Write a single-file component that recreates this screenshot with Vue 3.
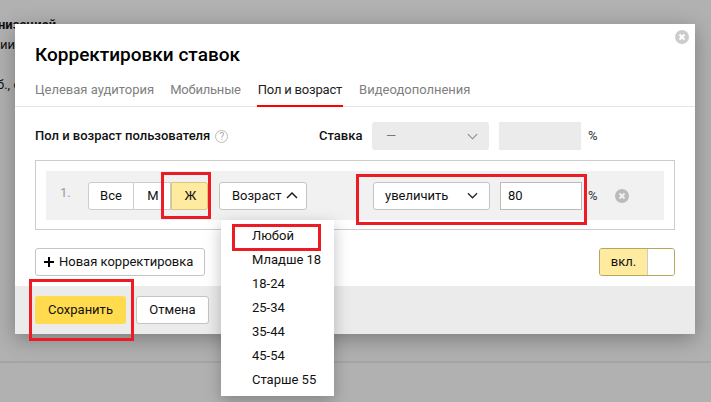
<script setup>
const tabs = [
  { label: 'Целевая аудитория' },
  { label: 'Мобильные' },
  { label: 'Пол и возраст', active: true },
  { label: 'Видеодополнения' }
]
const ages = ['Любой', 'Младше 18', '18-24', '25-34', '35-44', '45-54', 'Старше 55']
</script>

<template>
  <div class="page">
    <div class="bg-text t1">низацией</div>
    <div class="bg-text t2">ии</div>
    <div class="bg-text t3">б., с</div>
    <div class="bg-line"></div>

    <section class="modal">
      <svg class="close top-close" viewBox="0 0 14 14"><circle cx="7" cy="7" r="7" fill="#ccc"/><path d="M4.5 4.5l5 5M9.5 4.5l-5 5" stroke="#fff" stroke-width="2"/></svg>
      <h1 class="title">Корректировки ставок</h1>
      <nav class="tabs">
        <span v-for="t in tabs" :key="t.label" class="tab" :class="{ active: t.active }">{{ t.label }}</span>
      </nav>

      <div class="body">
        <div class="head">
          <div class="head-left">
            <b>Пол и возраст пользователя</b>
            <span class="help">?</span>
          </div>
          <b class="rate">Ставка</b>
          <div class="fake-select">
            <span>—</span>
            <svg class="chev" viewBox="0 0 12 7"><path d="M1 1l5 5 5-5" fill="none" stroke="#8a8a8a" stroke-width="1.2"/></svg>
          </div>
          <div class="fake-input"></div>
          <span class="pct">%</span>
        </div>

        <div class="rule">
          <div class="rule-inner">
            <span class="num">1.</span>
            <div class="segment">
              <span class="seg s1">Все</span>
              <span class="seg s2">М</span>
              <span class="seg s3">Ж</span>
            </div>
            <div class="btn age">Возраст
              <svg class="up" viewBox="0 0 12 7"><path d="M1 6l5-5 5 5" fill="none" stroke="#222" stroke-width="1.5"/></svg>
            </div>
            <div class="btn sel">
              <span>увеличить</span>
              <svg class="chev" viewBox="0 0 12 7"><path d="M1 1l5 5 5-5" fill="none" stroke="#222" stroke-width="1.3"/></svg>
            </div>
            <div class="input">80</div>
            <span class="pct p2">%</span>
            <svg class="close row-close" viewBox="0 0 14 14"><circle cx="7" cy="7" r="7" fill="#bbb"/><path d="M4.5 4.5l5 5M9.5 4.5l-5 5" stroke="#f1f1f1" stroke-width="2"/></svg>
          </div>
        </div>

        <div class="actions">
          <div class="btn add">
            <svg class="plus" viewBox="0 0 10 10"><path d="M5 0v10M0 5h10" stroke="#000" stroke-width="2"/></svg>
            Новая корректировка
          </div>
          <div class="toggle">
            <span class="on">вкл.</span>
            <span class="knob"></span>
          </div>
        </div>
      </div>

      <footer class="foot">
        <div class="btn save">Сохранить</div>
        <div class="btn cancel">Отмена</div>
      </footer>
    </section>

    <ul class="menu">
      <li v-for="a in ages" :key="a">{{ a }}</li>
    </ul>

    <div class="mark m-f"></div>
    <div class="mark m-any"></div>
    <div class="mark m-sel"></div>
    <div class="mark m-save"></div>
  </div>
</template>

<style scoped>
.page {
  position: relative;
  width: 711px;
  height: 402px;
  overflow: hidden;
  background: #b1b1b1;
  font: 13px/16px Roboto, "Noto Sans", sans-serif;
  color: #111;
  padding: 24px 0 0 15px;
  box-sizing: border-box;
}
.bg-text { position: absolute; left: 0; color: #111; font-size: 13px; white-space: nowrap; }
.t1 { top: 17px; font-weight: 700; left: -2px; }
.t2 { top: 37px; }
.t3 { top: 77px; left: -3px; }
.bg-line { position: absolute; left: 0; right: 0; top: 361px; height: 2px; background: #a4a4a4; }

.modal {
  position: relative;
  width: 680px;
  height: 310px;
  background: #fff;
  box-shadow: 0 5px 20px rgba(0, 0, 0, .3);
  display: flex;
  flex-direction: column;
}
.close { position: absolute; width: 14px; height: 14px; }
.top-close { top: 6px; left: 660px; }
.title {
  margin: 0;
  padding: 20px 0 0 20px;
  font-size: 19px;
  line-height: 22px;
  font-weight: 500;
  color: #000;
}
.tabs {
  display: flex;
  gap: 16px;
  margin-top: 15px;
  padding-left: 20px;
  box-sizing: border-box;
  border-bottom: 1px solid #e5e5e5;
  height: 26px;
  flex: none;
}
.tab { color: #808080; height: 25px; line-height: 18px; white-space: nowrap; }
.tab:nth-child(2), .tab:nth-child(3) { letter-spacing: -.2px; }
.tab.active { color: #222; border-bottom: 2px solid #f00; height: 24px; padding: 0 1px; }

.body { flex: 1; padding: 15px 20px 0; }
.head { display: flex; align-items: center; height: 28px; }
.head-left { display: flex; align-items: center; width: 284px; gap: 5px; }
.head-left b, .rate { font-weight: 500; font-size: 13px; color: #111; }
.help {
  width: 11px; height: 11px;
  border: 1px solid #bbb; border-radius: 50%;
  color: #aaa; font-size: 10px; line-height: 11px; text-align: center;
}
.rate { width: 53px; }
.fake-select {
  width: 117px; height: 28px; box-sizing: border-box;
  background: #ebebeb; border-radius: 3px;
  padding: 0 11px 0 14px;
  display: flex; justify-content: space-between; align-items: center;
  color: #777;
}
.chev { width: 11px; height: 7px; }
.fake-input { width: 82px; height: 28px; margin-left: 10px; background: #ebebeb; }
.pct { margin-left: 7px; color: #333; font-size: 13px; }

.rule {
  margin-top: 10px;
  height: 70px;
  box-sizing: border-box;
  border: 1px solid #ccc;
  padding: 10px;
}
.rule-inner {
  height: 49px;
  background: #f1f1f1;
  display: flex;
  align-items: center;
  position: relative;
}
.num { width: 42px; padding-left: 14px; box-sizing: border-box; color: #999; margin-top: -6px; }
.segment { display: flex; width: 120px; height: 28px; }
.seg {
  display: flex; align-items: center; justify-content: center;
  box-sizing: border-box; height: 28px; background: #fff;
  border: 1px solid #ccc; border-left: 0;
}
.s1 { width: 46px; border-left: 1px solid #ccc; border-radius: 3px 0 0 3px; }
.s2 { width: 37px; padding-left: 2px; }
.s3 { width: 37px; padding-left: 2px; background: #ffeba0; border-color: #d9c77e; border-left: 1px solid #d9c77e; border-radius: 0 3px 3px 0; }
.btn {
  box-sizing: border-box; height: 28px;
  background: #fff;
  border: 1px solid #c4c4c4; border-radius: 3px;
  display: flex; align-items: center;
  white-space: nowrap;
}
.age { width: 88px; margin-left: 11px; padding-left: 12px; gap: 4px; }
.up { width: 12px; height: 7px; }
.sel { width: 117px; margin-left: 66px; padding: 0 11px 0 11px; justify-content: space-between; }
.input {
  box-sizing: border-box; width: 82px; height: 28px; margin-left: 10px;
  background: #fff; border: 1px solid #bbb;
  display: flex; align-items: center; padding-left: 7px;
}
.p2 { margin-left: 6px; }
.row-close { left: 569px; top: 18px; }

.actions { display: flex; justify-content: space-between; margin-top: 18px; }
.add { width: 170px; padding-left: 8px; gap: 5px; }
.plus { width: 10px; height: 10px; }
.toggle {
  display: flex; width: 76px; height: 28px; box-sizing: border-box;
  border: 1px solid #b5a660; border-radius: 3px; overflow: hidden;
}
.on { width: 47px; background: #ffeba0; text-align: center; line-height: 26px; border-right: 1px solid #ccc; }
.knob { flex: 1; background: #fff; }

.foot {
  height: 48px; flex: none;
  background: #ebebeb;
  padding: 10px 20px;
  box-sizing: border-box;
  display: flex; gap: 10px;
}
.save { width: 91px; justify-content: center; background: #ffdb4d; border: 0; }
.cancel { width: 73px; justify-content: center; }

.menu {
  position: absolute; left: 221px; top: 220px;
  width: 113px; height: 176px;
  margin: 0; padding: 4px 0 0 31px; box-sizing: border-box;
  list-style: none; background: #fff;
  box-shadow: 0 5px 15px rgba(0, 0, 0, .25);
}
.menu li { height: 24px; line-height: 24px; white-space: nowrap; }

.mark { position: absolute; box-sizing: border-box; border: 3px solid #ed1c24; }
.m-f { left: 161px; top: 172px; width: 50px; height: 47px; }
.m-any { left: 232px; top: 224px; width: 89px; height: 27px; }
.m-sel { left: 356px; top: 174px; width: 231px; height: 51px; }
.m-save { left: 29px; top: 279px; width: 105px; height: 62px; }
</style>
